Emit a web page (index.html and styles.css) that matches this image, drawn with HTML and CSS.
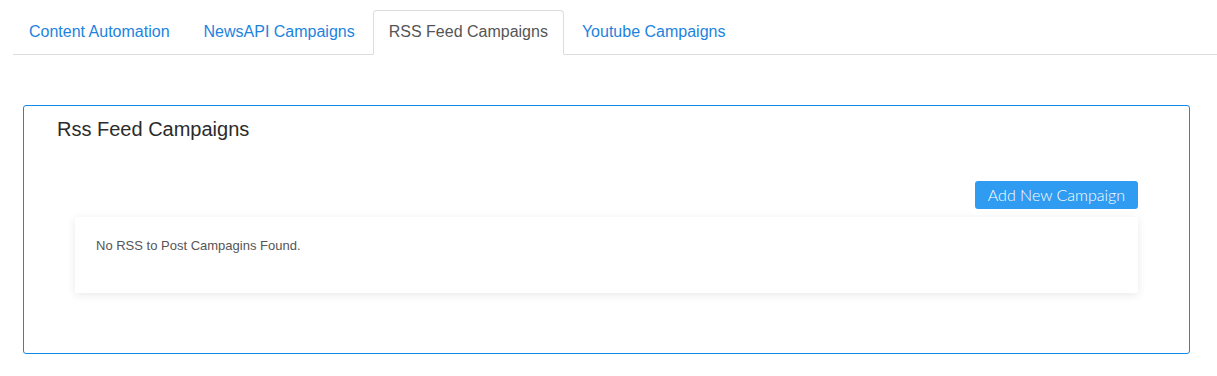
FILE: index.html
```html
<!DOCTYPE html>
<html lang="en">
<head>
<meta charset="utf-8">
<title>RSS Feed Campaigns</title>
<link rel="stylesheet" href="styles.css">
</head>
<body>
  <ul class="tabs">
    <li class="tab"><a href="#">Content Automation</a></li>
    <li class="tab"><a href="#">NewsAPI Campaigns</a></li>
    <li class="tab active"><a href="#">RSS Feed Campaigns</a></li>
    <li class="tab"><a href="#">Youtube Campaigns</a></li>
  </ul>
  <section class="panel">
    <h2 class="panel-title">Rss Feed Campaigns</h2>
    <div class="panel-body">
      <div class="actions">
        <button class="btn-add" type="button">Add New Campaign</button>
      </div>
      <div class="card">
        <p class="empty">No RSS to Post Campagins Found.</p>
      </div>
    </div>
  </section>
</body>
</html>
```

FILE: styles.css
```css
html, body {
  margin: 0;
  padding: 0;
  background: #ffffff;
  font-family: "Liberation Sans", Arial, sans-serif;
}

.tabs {
  list-style: none;
  margin: 10px 0 0 13px;
  padding: 0;
  display: flex;
  border-bottom: 1px solid #dddddd;
}

.tab {
  margin-bottom: -1px;
  margin-right: 2px;
}

.tab a {
  display: block;
  padding: 10px 15px 11px;
  line-height: 22px;
  font-size: 16px;
  color: #1c83e0;
  text-decoration: none;
  border: 1px solid transparent;
  border-radius: 4px 4px 0 0;
}

.tab.active a {
  color: #555555;
  background: #ffffff;
  border-color: #dddddd #dddddd transparent;
}

.panel {
  margin: 50px 27px 0 23px;
  border: 1px solid #1588e8;
  border-radius: 3px;
  height: 247px;
  box-sizing: content-box;
}

.panel-title {
  margin: 11px 0 0 33px;
  font-size: 20px;
  line-height: 24px;
  font-weight: normal;
  color: #2b2b2b;
}

.panel-body {
  padding: 40px 51px 0;
}

.actions {
  display: flex;
  justify-content: flex-end;
}

.btn-add {
  font-family: "Lato", "Open Sans", sans-serif;
  font-weight: 300;
  font-size: 16px;
  line-height: 28px;
  padding: 0 13px;
  height: 28px;
  border: none;
  border-radius: 3px;
  background: #2f9cf1;
  color: #ffffff;
  cursor: pointer;
}

.card {
  margin-top: 8px;
  height: 76px;
  box-sizing: border-box;
  padding: 20px 21px 0;
  background: #ffffff;
  border-radius: 2px;
  box-shadow: 0 2px 10px rgba(0, 0, 0, 0.09);
}

.empty {
  margin: 0;
  font-size: 13px;
  line-height: 18px;
  color: #555555;
}
```
